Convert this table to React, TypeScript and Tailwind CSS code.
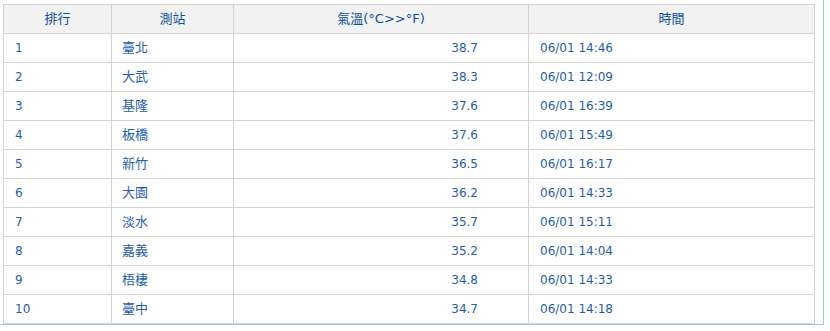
import React from "react";

const rows: [string, string, string, string][] = [
  ["1", "臺北", "38.7", "06/01 14:46"],
  ["2", "大武", "38.3", "06/01 12:09"],
  ["3", "基隆", "37.6", "06/01 16:39"],
  ["4", "板橋", "37.6", "06/01 15:49"],
  ["5", "新竹", "36.5", "06/01 16:17"],
  ["6", "大園", "36.2", "06/01 14:33"],
  ["7", "淡水", "35.7", "06/01 15:11"],
  ["8", "嘉義", "35.2", "06/01 14:04"],
  ["9", "梧棲", "34.8", "06/01 14:33"],
  ["10", "臺中", "34.7", "06/01 14:18"],
];

export default function App() {
  return (
    <div className="w-[824px] bg-white pl-[3px] pt-[4px] border-r border-b border-[#9dc4ec] font-['DejaVu_Sans','Noto_Sans_CJK_TC',sans-serif] text-[12px]">
      <table className="w-[811px] border-collapse table-fixed">
        <colgroup>
          <col className="w-[108px]" />
          <col className="w-[122px]" />
          <col className="w-[295px]" />
          <col className="w-[286px]" />
        </colgroup>
        <thead>
          <tr className="h-[29px] bg-[#f2f2f2] text-[#0c4d9e] text-[13px]">
            <th className="border border-[#d3d3d3] font-normal text-center p-0">排行</th>
            <th className="border border-[#d3d3d3] font-normal text-center p-0">測站</th>
            <th className="border border-[#d3d3d3] font-normal text-center p-0">氣溫(°C&gt;&gt;°F)</th>
            <th className="border border-[#d3d3d3] font-normal text-center p-0">時間</th>
          </tr>
        </thead>
        <tbody className="text-[#1f5eab]">
          {rows.map((r) => (
            <tr key={r[0]} className="h-[29px]">
              <td className="border border-[#d3d3d3] pl-[11px] p-0">{r[0]}</td>
              <td className="border border-[#d3d3d3] pl-[10px] p-0 text-[13px]">{r[1]}</td>
              <td className="border border-[#d3d3d3] text-right pr-[50px] p-0">{r[2]}</td>
              <td className="border border-[#d3d3d3] pl-[11px] p-0">{r[3]}</td>
            </tr>
          ))}
        </tbody>
      </table>
    </div>
  );
}
